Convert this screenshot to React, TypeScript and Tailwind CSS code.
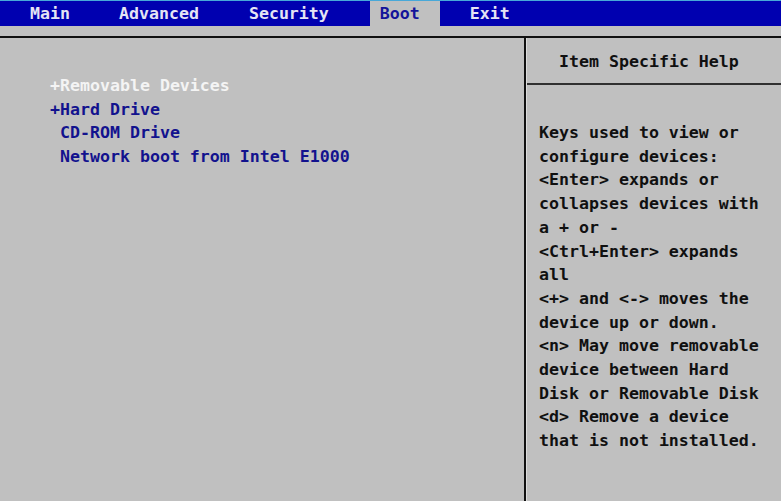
const tabs = [
  { label: 'Main', cls: 'ml-[20px] px-[10px]' },
  { label: 'Advanced', cls: 'ml-[29px] px-[10px]' },
  { label: 'Security', cls: 'ml-[30px] px-[10px]' },
  { label: 'Boot', cls: 'ml-[31px] pl-[10px] pr-[20px]', active: true },
  { label: 'Exit', cls: 'ml-[20px] px-[10px]' },
];

const bootItems = [
  { text: '+Removable Devices', cls: 'text-[#f4f4f4]' },
  { text: '+Hard Drive', cls: 'text-[#12128e]' },
  { text: ' CD-ROM Drive', cls: 'text-[#12128e]' },
  { text: ' Network boot from Intel E1000', cls: 'text-[#12128e]' },
];

const helpLines = [
  'Keys used to view or',
  'configure devices:',
  '<Enter> expands or',
  'collapses devices with',
  'a + or -',
  '<Ctrl+Enter> expands',
  'all',
  '<+> and <-> moves the',
  'device up or down.',
  '<n> May move removable',
  'device between Hard',
  'Disk or Removable Disk',
  '<d> Remove a device',
  'that is not installed.',
];

export default function App() {
  return (
    <div className="w-[781px] h-[501px] bg-[#c0c0c0] flex flex-col overflow-hidden font-['DejaVu_Sans_Mono',monospace] text-[16.6px] font-bold whitespace-pre">
      {/* menu bar */}
      <div className="h-px bg-[#48a8d8]" />
      <div className="h-[25px] bg-[#0000b0] flex items-stretch">
        {tabs.map((t) => (
          <div
            key={t.label}
            className={`${t.cls} flex items-center pt-[2px] ${t.active ? 'bg-[#c0c0c0] text-[#14149a]' : 'text-[#e4e4f4]'}`}
          >
            {t.label}
          </div>
        ))}
      </div>
      <div className="h-[10px]" />
      <div className="h-[2px] bg-[#101010]" />

      <div className="flex flex-1">
        {/* boot order list */}
        <div className="w-[524px] pt-[36px] pl-[50px] leading-[23.7px]">
          {bootItems.map((item) => (
            <div key={item.text} className={item.cls}>
              {item.text}
            </div>
          ))}
        </div>

        <div className="w-[2px] bg-[#101010]" />
        <div className="w-px bg-[#dcdcdc]" />

        {/* help panel */}
        <div className="flex-1 flex flex-col text-[#101010]">
          <div className="h-[45px] pl-[32px] pt-[3px] flex items-center">Item Specific Help</div>
          <div className="h-[2px] bg-[#303030]" />
          <div className="pt-[36px] pl-[12px] leading-[23.7px]">
            {helpLines.map((line) => (
              <div key={line}>{line}</div>
            ))}
          </div>
        </div>
      </div>
    </div>
  );
}
